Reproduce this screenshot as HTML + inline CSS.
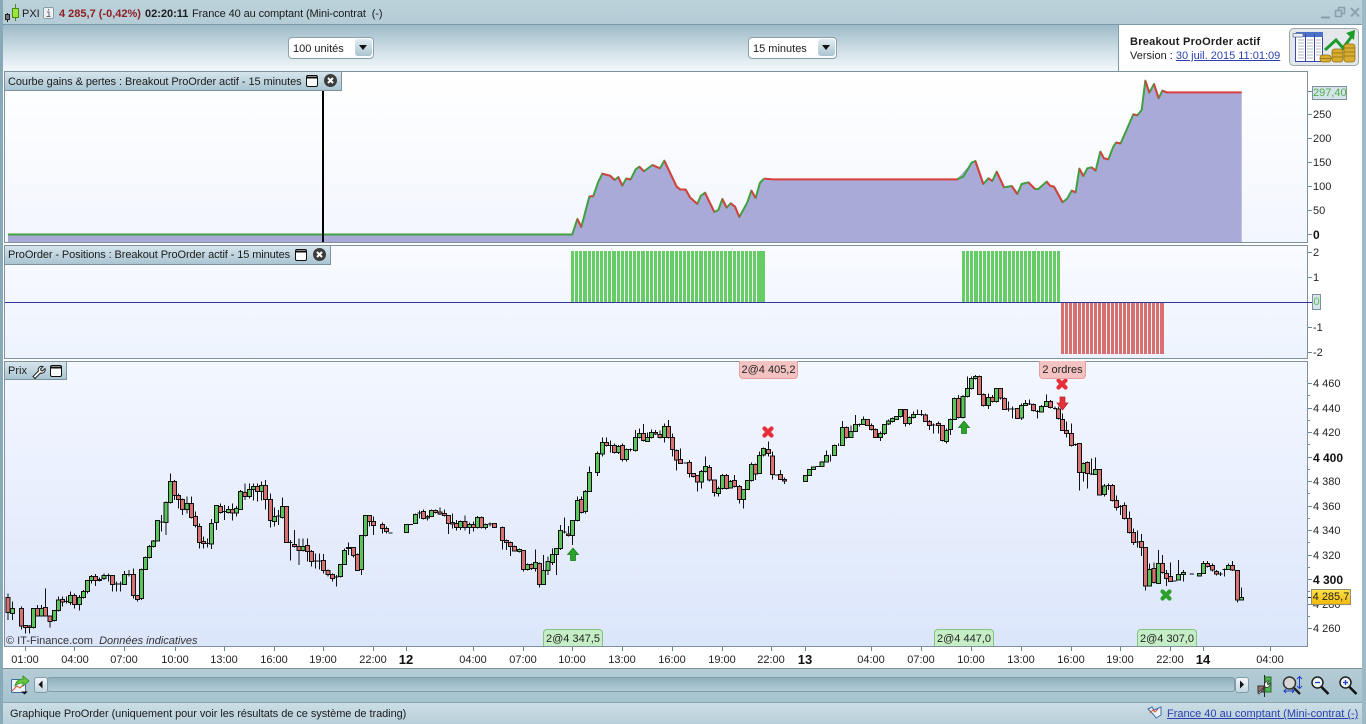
<!DOCTYPE html>
<html lang="fr"><head><meta charset="utf-8"><title>ProOrder</title>
<style>
html,body{margin:0;padding:0;width:1366px;height:724px;overflow:hidden;background:#fff}
body{position:relative;font:11px/14px "Liberation Sans",Arial,sans-serif;color:#1c1c1c}
div{position:absolute;box-sizing:border-box}
.t{position:absolute;white-space:nowrap;transform:translateY(1px)}
.b{font-weight:bold}
.p{left:4px;width:1304px;border:1px solid #7d929c}
.h{left:5px;background:linear-gradient(#d6e5ec,#a9c5d2);border-right:1px solid #7d929c;border-bottom:1px solid #7d929c}
.ax{left:1313px;color:#222}
.ax.b{font-size:12px;color:#111}
.tm{top:652px;transform:translate(-50%,1px);color:#222}
.tm.b{font-size:13px;color:#111}
.tag{border-radius:4px;text-align:center;line-height:19px;white-space:nowrap;color:#222}
.tr{background:#f5c2c2;border:1px solid #e3a0a0;border-top:0;border-radius:0 0 4px 4px;top:361px;height:18px}
.tg{background:#c6eec6;border:1px solid #82c482;border-bottom:0;border-radius:4px 4px 0 0;top:629px;height:17px}
.dd{top:37px;height:22px;background:#fff;border:1px solid #8aa1ac;border-radius:4px;padding:4px 0 0 4px;white-space:nowrap}
.ddb{top:39px;height:17px;width:17px;background:linear-gradient(#e3edf2,#a9c4d1);border-radius:3px}
.ddb:after{content:"";position:absolute;left:4px;top:6px;border:4.5px solid transparent;border-top:5px solid #111;border-bottom:0}
a{color:#2b3fb0;text-decoration:underline}
svg{position:absolute;left:0;top:0;overflow:visible}
.w{fill:none;stroke:#111;stroke-width:3;shape-rendering:crispEdges}
.g{fill:#5cc45c;stroke:#111;stroke-width:3;shape-rendering:crispEdges}
.r{fill:#d87272;stroke:#111;stroke-width:3;shape-rendering:crispEdges}
</style></head><body>

<!-- chrome -->
<div style="left:0;top:0;width:1366px;height:25px;background:linear-gradient(#bcd2db,#b4ccd6)"></div>
<div style="left:0;top:24px;width:1366px;height:1px;background:#7d9aa8"></div>
<div style="left:0;top:25px;width:1366px;height:46px;background:linear-gradient(#9dbac8,#d4e2e8 60%,#f4f8fa)"></div>
<div style="left:1118px;top:25px;width:248px;height:46px;background:#fff;border-left:1px solid #7d9aa8"></div>

<!-- panels -->
<div class="p" style="top:71px;height:172px;background:linear-gradient(#fff,#f2f6fe)"></div>
<div class="p" style="top:245px;height:114px;background:linear-gradient(#f9fbff,#edf3fe)"></div>
<div class="p" style="top:361px;height:286px;background:linear-gradient(#f3f7ff,#dce6fb)"></div>

<!-- bottom -->
<div style="left:0;top:668px;width:1366px;height:34px;background:linear-gradient(#b5ccd6,#a6c3cf);border-top:1px solid #7d929c"></div>
<div style="left:0;top:702px;width:1366px;height:22px;background:linear-gradient(#cbdde5,#b9d0da);border-top:1px solid #8ca6b2"></div>
<div style="left:47px;top:677px;width:1188px;height:15px;background:linear-gradient(#8fb0bd,#b4ccd6);border:1px solid #7f9ca9;border-radius:3px"></div>
<div style="left:34px;top:677px;width:14px;height:16px;background:linear-gradient(#f2f6f8,#c3d6de);border:1px solid #7f9ca9;border-radius:3px"></div>
<div style="left:1235px;top:677px;width:14px;height:16px;background:linear-gradient(#f2f6f8,#c3d6de);border:1px solid #7f9ca9;border-radius:3px"></div>

<!-- frame -->
<div style="left:0;top:0;width:3px;height:724px;background:#88a9b7"></div>
<div style="left:1362px;top:0;width:4px;height:724px;background:#9cb9c5"></div>
<div style="left:1119px;top:25px;width:243px;height:46px;background:#fff"></div>

<svg width="1366" height="724" viewBox="0 0 1366 724">
<!-- equity -->
<path fill="#aaaad8" d="M8 242V234H572.3L577.3 219L581.3 227L589.3 197L593.3 196L598.3 182L602.3 174L610 176L614.7 180L618.3 177L622.3 186L626 179L630.7 179L635.7 169L639.3 167L644 171L652.3 165L660 168L664.3 161L676.7 187L680 189L685.700 190L690 197L697.3 204L700.7 196L705 193L714.3 212L718.3 210L722.3 199L726.7 208L730.7 203L735 207L739.3 217L747.3 202L751.3 191L755.7 198L760 183L764 179L957 179L971.700 163L975.3 161L983.3 184L988.3 178L992.3 181L996.7 172L1004 187L1011.7 186L1017.3 194L1021.7 184L1028.3 182L1035 189L1038.3 189L1046.7 182L1050 186L1054 187L1062.7 202L1067.3 198L1071.7 191L1075.7 192L1079.3 169L1083.3 176L1087.3 168L1091.7 167L1095.7 171L1100.3 152L1104 158L1108.3 159L1113.3 147L1116 143L1120.7 143L1133.3 114L1137.3 115L1141.7 110L1145.3 81L1149.3 93L1154 84L1158.7 98L1162.3 91L1166.7 92L1241.7 92V242Z"/>
<path fill="none" stroke="#3ea03e" stroke-width="2" d="M8 234.500H573"/>
<g transform="translate(540,150) scale(.33333)" fill="none" stroke-width="6" stroke-linejoin="round">
<path stroke="#3ea03e" d="M97 253L112 207L124 231L148 140L160 138L175 95L187 71L210 77L224 90L235 81L247 107L258 86L272 88L287 58L298 50L312 64L337 45L360 55L373 32L410 110L420 118L437 119L450 142L472 162L482 138L495 128L523 186L535 180L547 147L560 173L572 160L585 170L598 201L622 157L634 122L647 144L660 98L672 86"/>
<path stroke="#d84040" d="M112 207L124 231M148 140L160 138M187 71L210 77L224 90M235 81L247 107M258 86L272 88M298 50L312 64M337 45L360 55M373 32L410 110L420 118L437 119L450 142L472 162M495 128L523 186M547 147L560 173M572 160L585 170L598 201M634 122L647 144M672 86L700 88H1255"/>
</g>
<g transform="translate(950,70) scale(.33333)" fill="none" stroke-width="6" stroke-linejoin="round">
<path stroke="#3ea03e" d="M22 327L40 320L65 278L76 273L100 342L115 325L127 333L140 305L162 352L185 348L202 372L215 342L235 337L255 357L265 357L290 335L300 347L312 350L338 397L352 385L365 362L377 367L388 296L400 318L412 295L425 292L437 302L451 245L462 265L475 268L490 230L498 218L512 220L550 133L562 136L575 120L586 32L598 68L612 42L626 85L637 62L650 67"/>
<path stroke="#d84040" d="M76 273L100 342M115 325L127 333M140 305L162 352M185 348L202 372M235 337L255 357M290 335L300 347L312 350L338 397M365 362L377 367M388 296L400 318M425 292L437 302M451 245L462 265L475 268M498 218L512 220M550 133L562 136M586 32L598 68M612 42L626 85M637 62L650 67L875 67"/>
</g>
<path stroke="#000" stroke-width="2" d="M323 90V242"/>

<!-- positions -->
<path fill="#66cc66" d="M571 251H765V302H571zM962 251H1060V302H962z"/>
<path fill="#d87070" d="M1061 303H1164V354H1061z"/>
<path stroke="#f6f9ff" stroke-width="1" fill="none" d="M574.5 251v51m4-51v51m4-51v51m5-51v51m4-51v51m4-51v51m4-51v51m4-51v51m4-51v51m4-51v51m5-51v51m4-51v51m4-51v51m4-51v51m4-51v51m4-51v51m4-51v51m5-51v51m4-51v51m4-51v51m4-51v51m4-51v51m4-51v51m4-51v51m5-51v51m4-51v51m4-51v51m4-51v51m4-51v51m4-51v51m4-51v51m5-51v51m4-51v51m4-51v51m4-51v51m4-51v51m4-51v51m4-51v51m5-51v51m4-51v51m4-51v51m4-51v51m4-51v51m4-51v51m4-51v51M965.5 251v51m4-51v51m4-51v51m5-51v51m4-51v51m4-51v51m4-51v51m4-51v51m4-51v51m4-51v51m5-51v51m4-51v51m4-51v51m4-51v51m4-51v51m4-51v51m4-51v51m5-51v51m4-51v51m4-51v51m4-51v51m4-51v51m4-51v51"/>
<path stroke="#f3f6fe" stroke-width="1" fill="none" d="M1064.5 303v51m4-51v51m4-51v51m5-51v51m4-51v51m4-51v51m4-51v51m4-51v51m4-51v51m4-51v51m5-51v51m4-51v51m4-51v51m4-51v51m4-51v51m4-51v51m4-51v51m5-51v51m4-51v51m4-51v51m4-51v51m4-51v51m4-51v51m4-51v51"/>
<path stroke="#33339a" stroke-width="1" d="M5 302.500H1312"/>

<!-- candles 1 -->
<g transform="translate(0,470) scale(.33333)">
<path class="w" d="M24 370V450M37 395V450M64 410V478M76 465V490M88 465V490M100 415V475M112 405V440M124 405V440M136 355V440M150 438V472M163 420V455M175 380V425M187 380V410M199 380V400M211 365V405M224 370V415M238 375V422M250 360V385M262 330V370M274 315V340M286 312V348M298 322V335M312 310V330M325 310V335M337 316V365M349 335V365M361 335V365M373 303V345M387 300V320M400 296V385M412 376V395M424 295V390M436 260V300M448 225V265M460 210V232M472 150V215M484 135V185M498 95V195M511 10V100M524 30V90M536 70V115M548 85V135M561 80V130M574 80V145M587 125V172M599 160V235M611 200V235M623 205V232M635 147V237M649 105V180M662 100V130M674 105V150M686 108V130M698 100V152M710 108V140M722 60V120M735 40V90M748 40V85M760 40V92M772 40V95M784 35V92M796 30V118M811 70V172M823 112V170M835 120V165M847 82V145M859 109V218M871 210V272M883 180V232M897 205V285M909 205V245M922 205V275M934 240V290M946 250V295M958 250V298M970 252V310M984 298V320M997 310V335M1009 315V350M1021 282V322M1033 235V285M1045 218V255M1060 232V262M1072 250V302M1084 195V315M1096 135V200M1108 136V170M1120 140V195M1147 157V190M1159 170V190M193 395H205M319 317H331M343 342H367M381 314H393M478 156H490M617 220H629M668 125H680M829 138H841M865 218H877M940 273H964M1003 321H1015M1165 189H1177"/>
<path class="g" d="M31 415h12V430h-12zM94 415h12V472h-12zM118 415h12V438h-12zM157 422h12V452h-12zM169 390h12V422h-12zM205 376h12V397h-12zM232 382h12V403h-12zM244 364h12V382h-12zM256 331h12V364h-12zM268 319h12V331h-12zM292 328h12V331h-12zM306 316h12V325h-12zM367 313h12V343h-12zM418 298h12V386h-12zM430 262h12V298h-12zM442 229h12V262h-12zM454 213h12V229h-12zM466 152h12V213h-12zM492 97h12V157h-12zM505 34h12V97h-12zM555 100h12V118h-12zM629 160h12V222h-12zM643 106h12V157h-12zM680 118h12V127h-12zM704 115h12V129h-12zM716 64h12V118h-12zM742 58h12V79h-12zM754 49h12V58h-12zM778 46h12V64h-12zM817 140h12V154h-12zM841 109h12V142h-12zM903 229h12V241h-12zM1015 283h12V320h-12zM1027 241h12V283h-12zM1039 232h12V235h-12zM1078 196h12V298h-12zM1090 136h12V196h-12z"/>
<path class="r" d="M18 382h12V427h-12zM58 415h12V468h-12zM70 466h12V472h-12zM82 468h12V472h-12zM106 415h12V438h-12zM130 412h12V438h-12zM144 438h12V454h-12zM181 388h12V396h-12zM218 376h12V403h-12zM280 319h12V331h-12zM331 316h12V343h-12zM394 313h12V376h-12zM406 376h12V388h-12zM518 34h12V76h-12zM530 76h12V88h-12zM542 88h12V118h-12zM568 100h12V142h-12zM581 139h12V167h-12zM593 169h12V217h-12zM605 214h12V220h-12zM656 110h12V127h-12zM692 118h12V129h-12zM729 68h12V79h-12zM766 49h12V64h-12zM790 46h12V88h-12zM805 88h12V151h-12zM853 109h12V217h-12zM877 223h12V229h-12zM891 229h12V241h-12zM916 226h12V244h-12zM928 244h12V274h-12zM964 271h12V301h-12zM978 301h12V313h-12zM991 313h12V325h-12zM1054 232h12V256h-12zM1066 253h12V301h-12zM1102 136h12V154h-12zM1114 154h12V166h-12zM1141 163h12V175h-12zM1153 175h12V184h-12z"/>
</g>

<!-- candles 2 -->
<g transform="translate(400,400) scale(.33333)">
<path class="w" d="M19 372V398M27 374H39M46 340V372M58 332V355M70 328V358M82 345V362M94 328V350M107 328V340M120 322V345M133 328V350M145 346V402M157 340V385M169 360V392M181 362V390M195 347V392M208 368V402M220 365V395M232 348V385M244 350V385M256 370V388M270 368V380M284 370V384M307 380V448M319 418V450M331 425V468M344 436V455M358 445V458M371 450V515M383 490V512M395 490V510M407 448V515M418 488V563M431 465V555M444 470V525M457 445V495M469 445V525M481 375V450M493 352V400M505 378V410M517 360V435M532 290V365M545 290V340M556 270V340M569 200V275M592 155V228M607 112V170M619 112V140M631 122V158M643 130V160M655 135V162M667 130V185M680 145V185M692 145V155M706 90V155M718 85V115M730 72V125M742 98V125M754 88V115M767 90V105M780 92V115M793 70V128M805 60V115M817 100V170M829 148V212M841 145V192M868 180V232M880 220V232M892 226V275M904 210V265M916 170V218M929 195V245M943 238V290M955 260V290M967 222V268M979 222V268M991 240V265M1003 225V262M1018 255V310M1031 268V325M1043 240V270M1055 188V245M1067 190V240M1079 155V222M1091 142V170M1105 125V170M1118 155V238M1142 210V240M1154 232V252M52 339H64M264 372H276M487 396H499M625 136H637M686 149H698M850 189H862M1124 225H1136"/>
<path class="g" d="M13 373h12V397h-12zM40 343h12V370h-12zM76 350h12V354h-12zM88 332h12V350h-12zM175 365h12V382h-12zM202 373h12V382h-12zM226 352h12V382h-12zM250 373h12V382h-12zM352 448h12V455h-12zM377 493h12V508h-12zM401 488h12V505h-12zM425 512h12V553h-12zM438 485h12V512h-12zM451 463h12V487h-12zM463 446h12V463h-12zM475 391h12V445h-12zM511 361h12V406h-12zM526 301h12V361h-12zM550 274h12V335h-12zM563 217h12V274h-12zM586 160h12V217h-12zM601 127h12V162h-12zM649 139h12V157h-12zM674 149h12V178h-12zM700 112h12V152h-12zM712 100h12V112h-12zM736 112h12V124h-12zM748 98h12V112h-12zM787 80h12V112h-12zM898 214h12V246h-12zM910 199h12V214h-12zM949 265h12V280h-12zM961 226h12V265h-12zM985 244h12V264h-12zM1025 268h12V298h-12zM1037 241h12V268h-12zM1049 193h12V241h-12zM1073 166h12V220h-12zM1085 145h12V165h-12z"/>
<path class="r" d="M64 335h12V355h-12zM101 332h12V338h-12zM114 336h12V342h-12zM127 340h12V346h-12zM139 346h12V371h-12zM151 368h12V372h-12zM163 371h12V382h-12zM189 365h12V382h-12zM214 373h12V382h-12zM238 352h12V382h-12zM278 371h12V382h-12zM301 382h12V421h-12zM313 421h12V427h-12zM325 427h12V440h-12zM338 440h12V453h-12zM365 451h12V509h-12zM389 493h12V505h-12zM412 490h12V553h-12zM499 402h12V406h-12zM539 298h12V337h-12zM613 127h12V136h-12zM637 137h12V158h-12zM661 137h12V178h-12zM724 100h12V122h-12zM761 98h12V102h-12zM774 103h12V112h-12zM799 80h12V112h-12zM811 112h12V148h-12zM823 152h12V180h-12zM835 179h12V190h-12zM862 187h12V220h-12zM874 220h12V229h-12zM886 226h12V246h-12zM923 203h12V240h-12zM937 240h12V278h-12zM973 226h12V265h-12zM997 241h12V259h-12zM1012 259h12V298h-12zM1061 193h12V222h-12zM1099 148h12V160h-12zM1112 168h12V223h-12zM1136 224h12V238h-12zM1148 238h12V243h-12z"/>
</g>

<!-- candles 3 -->
<g transform="translate(800,360) scale(.33333)">
<path class="w" d="M16 345V365M28 327V348M40 319V330M66 303V321M79 272V307M91 283V305M103 254V288M115 250V258M127 183V258M139 200V235M153 197V233M166 165V216M178 190V200M190 170V195M203 178V198M215 190V212M227 205V234M241 215V243M253 192V225M265 178V195M277 173V187M289 168V180M302 148V172M316 148V200M329 170V195M341 155V175M353 148V165M365 150V168M376 160V186M388 180V210M401 190V220M415 185V220M427 195V245M440 205V250M452 175V225M463 112V180M476 105V175M489 105V175M502 50V112M514 50V88M527 45V58M538 46V105M551 100V140M565 100V147M577 105V127M590 85V128M602 85V118M614 112V150M626 125V155M638 140V175M652 145V177M665 130V180M677 120V138M689 118V135M701 130V155M713 150V176M725 135V158M739 103V141M751 120V145M765 140V148M775 140V178M788 160V213M800 185V232M814 190V260M826 250V258M838 250V392M851 308V365M863 305V385M875 295V345M887 292V345M46 320H58M172 194H184M347 163H371M395 195H407M620 147H644M683 132H695M707 155H719M759 146H771M820 254H832M869 342H881"/>
<path class="g" d="M10 346h12V365h-12zM22 328h12V346h-12zM34 321h12V328h-12zM60 306h12V320h-12zM73 286h12V306h-12zM97 256h12V286h-12zM121 203h12V256h-12zM147 215h12V232h-12zM160 194h12V214h-12zM184 179h12V193h-12zM235 220h12V232h-12zM247 193h12V221h-12zM259 183h12V192h-12zM271 176h12V184h-12zM283 170h12V178h-12zM296 149h12V169h-12zM323 173h12V190h-12zM335 164h12V172h-12zM434 211h12V244h-12zM446 179h12V209h-12zM457 115h12V179h-12zM483 110h12V172h-12zM496 86h12V110h-12zM508 56h12V86h-12zM521 50h12V56h-12zM559 112h12V136h-12zM584 86h12V124h-12zM659 136h12V174h-12zM671 130h12V136h-12zM719 140h12V156h-12zM733 125h12V139h-12zM845 310h12V337h-12zM881 329h12V343h-12z"/>
<path class="r" d="M133 203h12V232h-12zM197 179h12V197h-12zM209 196h12V208h-12zM221 208h12V232h-12zM310 149h12V190h-12zM370 165h12V184h-12zM382 184h12V196h-12zM409 191h12V196h-12zM421 196h12V241h-12zM470 115h12V172h-12zM532 50h12V104h-12zM545 104h12V136h-12zM571 112h12V124h-12zM596 86h12V114h-12zM608 115h12V149h-12zM646 146h12V175h-12zM695 133h12V151h-12zM745 125h12V143h-12zM769 147h12V175h-12zM782 178h12V211h-12zM794 211h12V220h-12zM808 220h12V256h-12zM832 251h12V337h-12zM857 308h12V340h-12zM893 329h12V405h-12z"/>
</g>

<!-- candles 4 -->
<g transform="translate(1080,470) scale(.33333)">
<path class="w" d="M73 42V80M85 40V60M97 42V95M110 76V122M122 105V135M134 98V148M148 125V190M160 175V225M172 182V232M184 192V258M196 232V362M209 280V350M222 278V340M235 240V342M247 255V310M259 300V348M271 278V336M295 270V332M310 300V335M370 273V312M382 273V292M397 280V305M409 300V316M421 306V318M433 295V320M445 280V300M458 273V303M472 300V398M485 353V392M79 47H91M116 110H128M166 216H178M277 333H289M328 312H342M415 312H427M427 298H439"/>
<path class="g" d="M67 48h12V74h-12zM203 299h12V348h-12zM229 281h12V340h-12zM289 314h12V330h-12zM304 307h12V313h-12zM352 310h12V318h-12zM364 281h12V310h-12zM439 286h12V298h-12zM479 382h12V390h-12z"/>
<path class="r" d="M91 46h12V91h-12zM104 91h12V112h-12zM128 106h12V145h-12zM142 146h12V187h-12zM154 187h12V217h-12zM178 214h12V232h-12zM190 232h12V348h-12zM216 296h12V337h-12zM241 281h12V307h-12zM253 310h12V325h-12zM265 320h12V334h-12zM376 281h12V289h-12zM391 287h12V300h-12zM403 304h12V312h-12zM452 286h12V300h-12zM466 302h12V390h-12z"/>
</g>

<!-- markers -->
<g fill="none" stroke-width="4.200" stroke-linecap="round">
<path stroke="#e5303a" d="M764.500 428.500l7 7M771.500 428.500l-7 7"/>
<path stroke="#e5303a" d="M1058.500 380.500l7 7M1065.500 380.500l-7 7"/>
<path stroke="#2da02d" d="M1162.500 591.500l7 7M1169.500 591.500l-7 7"/>
</g>
<g fill="#e5303a" stroke="#b5242c" stroke-width=".7">
<path d="M1060 397h5v6h3l-5.500 7-5.500-7h3z"/>
</g>
<g fill="#2da02d" stroke="#107a10" stroke-width=".7">
<path d="M570.500 560.500v-6h-3l5.500-6.500 5.500 6.500h-3v6z"/>
<path d="M961.500 433.500v-6h-3l5.500-6.500 5.500 6.500h-3v6z"/>
</g>

<!-- axis ticks -->
<path stroke="#6d8590" fill="none" d="M1308 91.500h4M1308 114.500h4M1308 138.500h4M1308 162.500h4M1308 186.500h4M1308 210.500h4M1308 234.500h4M1308 252.500h4M1308 277.500h4M1308 327.500h4M1308 352.500h4M1308 383.500h4M1308 408.500h4M1308 432.500h4M1308 457.500h4M1308 481.500h4M1308 506.500h4M1308 530.500h4M1308 555.500h4M1308 579.500h4M1308 604.500h4M1308 628.500h4M1308 395.500h2M1308 420.500h2M1308 444.500h2M1308 469.500h2M1308 493.500h2M1308 518.500h2M1308 542.500h2M1308 567.500h2M1308 591.500h2M1308 616.500h2M25.500 647v4M74.500 647v4M124.500 647v4M175.500 647v4M224.500 647v4M274.500 647v4M323.500 647v4M373.500 647v4M406.500 647v4M473.500 647v4M523.500 647v4M572.500 647v4M622.500 647v4M672.500 647v4M722.500 647v4M771.500 647v4M805.500 647v4M871.500 647v4M921.500 647v4M971.500 647v4M1021.500 647v4M1071.500 647v4M1120.500 647v4M1170.500 647v4M1203.500 647v4M1270.500 647v4"/>
<path stroke="#222" d="M1308 597.500h4"/>
</svg>

<!-- panel headers -->
<div class="h" style="top:72px;width:337px;height:19px"></div>
<div class="h" style="top:246px;width:326px;height:19px"></div>
<div class="h" style="top:362px;width:62px;height:18px"></div>
<div class="t" style="left:8px;top:74px;letter-spacing:-.07px">Courbe gains &amp; pertes : Breakout ProOrder actif - 15 minutes</div>
<div class="t" style="left:8px;top:247px;letter-spacing:-.1px">ProOrder - Positions : Breakout ProOrder actif - 15 minutes</div>
<div class="t" style="left:8px;top:363px">Prix</div>

<svg width="1366" height="724" viewBox="0 0 1366 724">
<!-- panel icons -->
<g fill="#fff" stroke="#111" stroke-width="1">
<rect x="306.500" y="75.500" width="11" height="11" rx="1.500"/><path d="M307 77.500h10" stroke-width="2"/>
<rect x="295.500" y="249.500" width="11" height="11" rx="1.500"/><path d="M296 251.500h10" stroke-width="2"/>
<rect x="50.500" y="365.500" width="11" height="11" rx="1.500"/><path d="M51 367.500h10" stroke-width="2"/>
</g>
<circle cx="330.500" cy="80.500" r="6.500" fill="#3c3c3c"/><path d="M328 78l5 5M333 78l-5 5" stroke="#fff" stroke-width="2"/>
<circle cx="319.500" cy="254.500" r="6.500" fill="#3c3c3c"/><path d="M317 252l5 5M322 252l-5 5" stroke="#fff" stroke-width="2"/>
<path d="M33 376.500l5.500-5.500a3.500 3.500 0 0 1 4.500-4.500l-2.500 2.500 .5 1.500 1.500 .5 2.500-2.500a3.500 3.500 0 0 1-4.500 4.500l-5.500 5.500z" fill="#fff" stroke="#222" stroke-width="1"/>

<!-- title icons -->
<path d="M7.500 13v9" stroke="#222"/><rect x="5.500" y="14.500" width="4" height="5" fill="#777" stroke="#222"/>
<path d="M15.500 4v17" stroke="#4d8a10"/><rect x="12.500" y="8.500" width="6" height="9" fill="#9ae63c" stroke="#4d8a10"/>
<rect x="43.500" y="7.500" width="10" height="11" rx="1.500" fill="#eef2f4" stroke="#8a9ea8"/>
<path d="M48.500 9v1.500M47 12h2v4.500M46.500 16.500h4" stroke="#666" fill="none"/>
<!-- window buttons -->
<path d="M1321 17.500h9" stroke="#8aa0aa" stroke-width="2"/>
<path d="M1335.500 10.500h6v6h-6zM1338.500 10.500v-3h6v6h-3" fill="#b4ccd6" stroke="#8aa0aa" stroke-width="1.500"/>
<path d="M1351 8l8 8.500M1359 8l-8 8.500" stroke="#8aa0aa" stroke-width="2"/>

<!-- logo -->
<rect x="1289.500" y="28.500" width="69" height="37" rx="4" fill="#e4e8ea" stroke="#9aa8ae"/>
<rect x="1295.500" y="33.500" width="27" height="28" fill="#fff" stroke="#3b4aa8"/>
<rect x="1296" y="32" width="27" height="5" fill="#4a73c8"/>
<rect x="1293" y="33.500" width="10" height="3.500" rx="1" fill="#eef2f8" stroke="#5a6a8a" stroke-width=".7"/>
<path d="M1305.500 34v27M1314.500 34v27" stroke="#3b4aa8"/>
<path d="M1298 40h6M1298 43h6M1298 46h6M1298 49h6M1298 52h6M1298 55h6M1298 58h6M1307 40h6M1307 43h6M1307 46h6M1307 49h6M1307 52h6M1307 55h6M1307 58h6M1316 40h5M1316 43h5M1316 46h5M1316 49h5M1316 52h5M1316 55h5" stroke="#9aa4ac" stroke-width=".8"/>
<path d="M1325 50l11 -10 7 8 9-12" fill="none" stroke="#1e9a2a" stroke-width="3"/>
<path d="M1346 33l9-3-1 10z" fill="#1e9a2a"/>
<g fill="#d8ac2e" stroke="#8c6c10" stroke-width=".7">
<rect x="1320" y="55" width="11" height="7" rx="2.500"/>
<rect x="1332" y="49" width="11" height="13" rx="2.500"/>
<rect x="1344" y="44" width="11" height="18" rx="2.500"/>
</g>
<path d="M1332 53h11M1332 57h11M1344 48h11M1344 52h11M1344 56h11M1320 58.500h11" stroke="#8c6c10" stroke-width=".7"/>

<!-- bottom icons -->
<rect x="11.500" y="679.500" width="14" height="13" rx="1" fill="#eef4fa" stroke="#3e6ba8"/>
<path d="M12 691l5-5 3 2 4-4" stroke="#d85030" fill="none"/>
<path d="M15 686c1-5 4-7 8-7v-3l6 5-6 5v-3c-3 0-6 1-8 3z" fill="#62c83a" stroke="#2d8a1c" stroke-width=".8"/>
<path d="M21 691.500h7l-3.500 3z" fill="#111"/>
<path d="M38.500 684.500l4-4v8z" fill="#111"/>
<path d="M1244 684.500l-4-4v8z" fill="#111"/>
<path d="M1264.500 675v22" stroke="#222"/>
<rect x="1258" y="686" width="6" height="6" fill="#a56a6a" stroke="#333"/>
<rect x="1265" y="677" width="6" height="15" fill="#4db84d" stroke="#2a6a2a"/>
<path d="M1258 693l7-7a3.500 3.500 0 0 1 4-5l-2 2 1 2 2-2a3.500 3.500 0 0 1-5 4l-6 7z" fill="#fff" stroke="#333" stroke-width=".8"/>
<circle cx="1289.500" cy="683" r="6" fill="#d6d6d6" stroke="#333" stroke-width="1.500"/>
<path d="M1294 688l6 6" stroke="#222" stroke-width="2.500"/>
<path d="M1299.500 677v11M1297 679l2.500-2.500 2.500 2.500M1297 686l2.500 2.500 2.500-2.500M1284 691h10M1286 689l-2 2 2 2M1292 689l2 2-2 2" fill="none" stroke="#1e3ec8"/>
<circle cx="1317.500" cy="682.500" r="5.500" fill="#eef3f5" stroke="#222" stroke-width="1.500"/>
<path d="M1321.500 687l7 7" stroke="#111" stroke-width="2.500"/><path d="M1315 682.500h5" stroke="#1e3ec8" stroke-width="1.300"/>
<circle cx="1345.500" cy="682.500" r="5.500" fill="#eef3f5" stroke="#222" stroke-width="1.500"/>
<path d="M1349.500 687l7 7" stroke="#111" stroke-width="2.500"/><path d="M1343 682.500h5M1345.500 680v5" stroke="#1e3ec8" stroke-width="1.300"/>
<path d="M1148 709l4-2 2 3 7-3v8l-5 3-3-4z" fill="#eef4fa" stroke="#3e6ba8"/>
<path d="M1150 713l3-3 2 2 3-3" stroke="#d85030" fill="none"/>
</svg>

<!-- title text -->
<div class="t" style="left:22px;top:6px">PXI</div>
<div class="t b" style="left:59px;top:6px;color:#8e1f24">4 285,7 (-0,42%)</div>
<div class="t b" style="left:145px;top:6px">02:20:11</div>
<div class="t" style="left:192px;top:6px;white-space:pre;letter-spacing:-.1px">France 40 au comptant (Mini-contrat  (-)</div>

<!-- dropdowns -->
<div class="dd" style="left:288px;width:86px">100 unités</div><div class="ddb" style="left:355px"></div>
<div class="dd" style="left:748px;width:89px">15 minutes</div><div class="ddb" style="left:818px"></div>

<!-- info -->
<div class="t b" style="left:1130px;top:34px;letter-spacing:.25px">Breakout ProOrder actif</div>
<div class="t" style="left:1130px;top:48px">Version : <a>30 juil. 2015 11:01:09</a></div>

<!-- axes -->
<div class="t ax" style="top:107px">250</div><div class="t ax" style="top:131px">200</div><div class="t ax" style="top:155px">150</div><div class="t ax" style="top:179px">100</div><div class="t ax" style="top:203px">50</div><div class="t ax b" style="top:227px">0</div>
<div class="t ax" style="top:245px">2</div><div class="t ax" style="top:270px">1</div><div class="t ax" style="top:320px">-1</div><div class="t ax" style="top:345px">-2</div>
<div class="t ax" style="top:376px">4 460</div><div class="t ax" style="top:401px">4 440</div><div class="t ax" style="top:425px">4 420</div><div class="t ax b" style="top:450px">4 400</div><div class="t ax" style="top:474px">4 380</div><div class="t ax" style="top:499px">4 360</div><div class="t ax" style="top:523px">4 340</div><div class="t ax" style="top:548px">4 320</div><div class="t ax b" style="top:572px">4 300</div><div class="t ax" style="top:597px">4 280</div><div class="t ax" style="top:621px">4 260</div>
<div style="left:1312px;top:86px;width:35px;height:14px;background:#d7e3ea;border:1px solid #7d929c;color:#4cb04c;line-height:13px;text-align:center">297,40</div>
<div style="left:1312px;top:294px;width:9px;height:16px;background:#d7e3ea;border:1px solid #7d929c;color:#5cc05c;line-height:15px;text-align:center">0</div>
<div style="left:1311px;top:589px;width:40px;height:16px;background:linear-gradient(#fde24a,#f2b90c);border:1px solid #8f8f70;line-height:15px;text-align:center;white-space:nowrap">4 285,7</div>

<!-- tags -->
<div class="tag tr" style="left:739px;width:59px">2@4 405,2</div>
<div class="tag tr" style="left:1039px;width:47px">2 ordres</div>
<div class="tag tg" style="left:543px;width:60px">2@4 347,5</div>
<div class="tag tg" style="left:934px;width:60px">2@4 447,0</div>
<div class="tag tg" style="left:1137px;width:60px">2@4 307,0</div>
<div class="t" style="left:6px;top:633px;color:#333;white-space:pre">© IT-Finance.com  <i>Données indicatives</i></div>

<!-- time axis -->
<div class="t tm" style="left:25px">01:00</div><div class="t tm" style="left:75px">04:00</div><div class="t tm" style="left:124px">07:00</div><div class="t tm" style="left:175px">10:00</div><div class="t tm" style="left:224px">13:00</div><div class="t tm" style="left:274px">16:00</div><div class="t tm" style="left:323px">19:00</div><div class="t tm" style="left:373px">22:00</div><div class="t tm b" style="left:406px">12</div><div class="t tm" style="left:473px">04:00</div><div class="t tm" style="left:523px">07:00</div><div class="t tm" style="left:572px">10:00</div><div class="t tm" style="left:622px">13:00</div><div class="t tm" style="left:672px">16:00</div><div class="t tm" style="left:722px">19:00</div><div class="t tm" style="left:771px">22:00</div><div class="t tm b" style="left:805px">13</div><div class="t tm" style="left:871px">04:00</div><div class="t tm" style="left:921px">07:00</div><div class="t tm" style="left:971px">10:00</div><div class="t tm" style="left:1021px">13:00</div><div class="t tm" style="left:1071px">16:00</div><div class="t tm" style="left:1120px">19:00</div><div class="t tm" style="left:1170px">22:00</div><div class="t tm b" style="left:1203px">14</div><div class="t tm" style="left:1270px">04:00</div>

<!-- status -->
<div class="t" style="left:10px;top:706px;letter-spacing:-.06px">Graphique ProOrder (uniquement pour voir les résultats de ce système de trading)</div>
<div class="t" style="left:1167px;top:706px"><a>France 40 au comptant (Mini-contrat (-)</a></div>
</body></html>
